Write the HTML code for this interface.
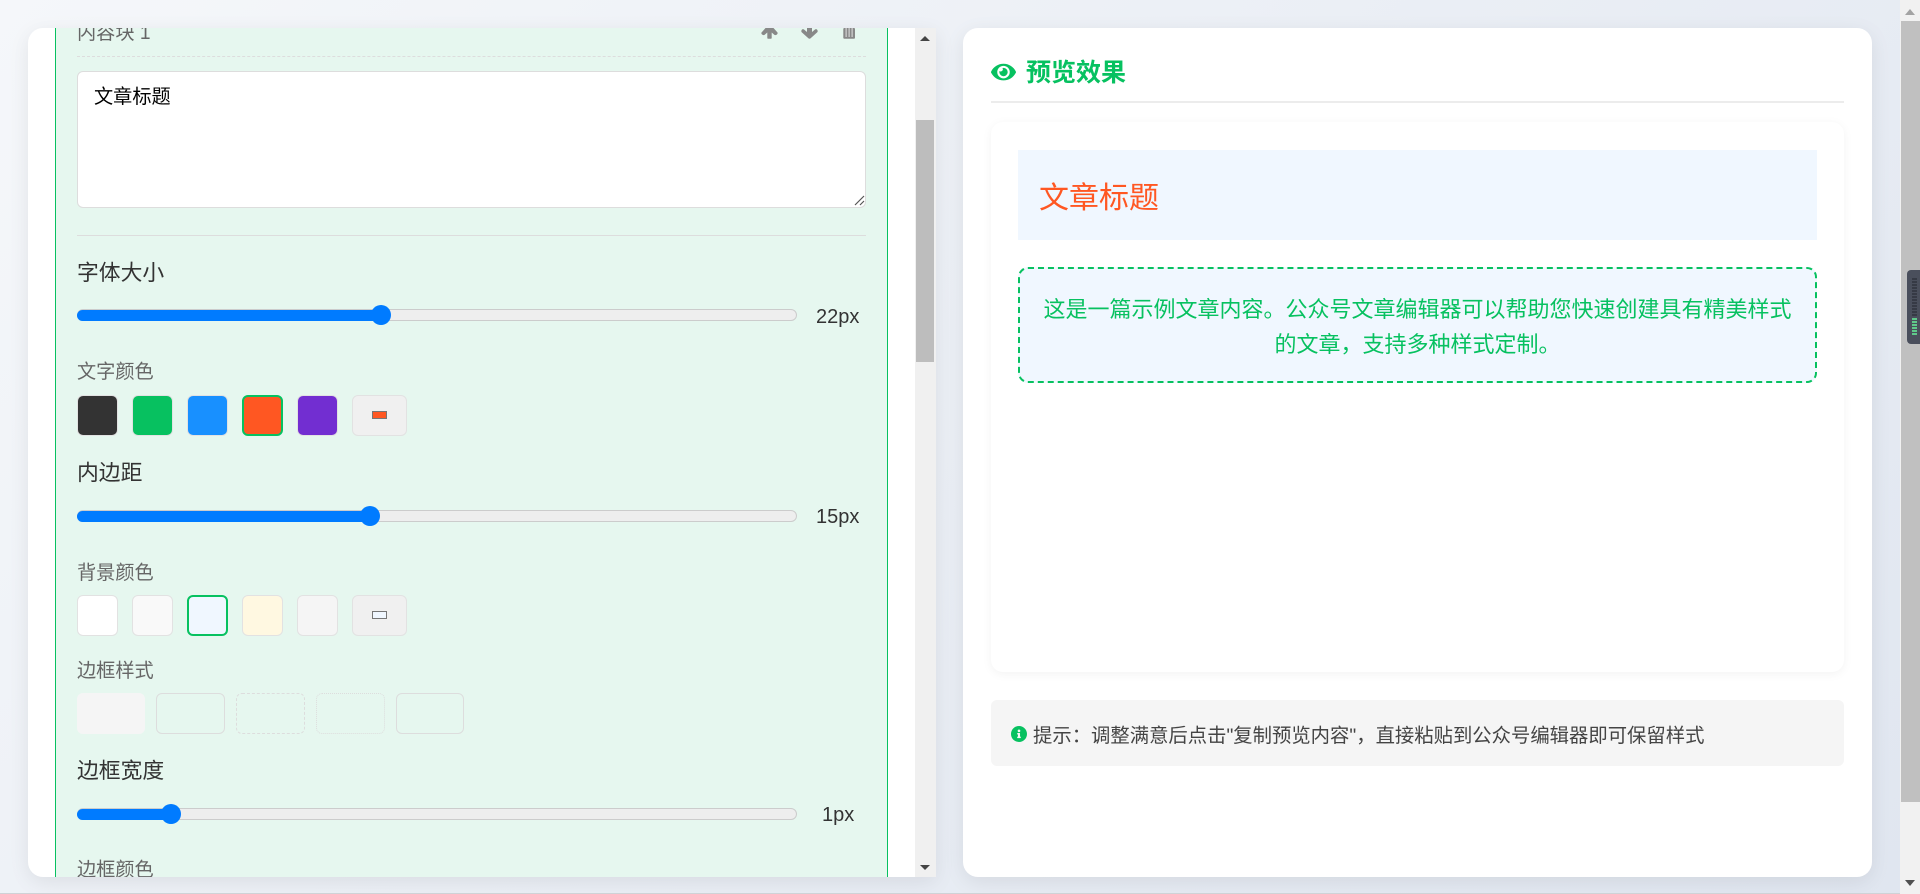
<!DOCTYPE html>
<html lang="zh"><head><meta charset="utf-8"><title>公众号文章编辑器</title>
<style>
*{box-sizing:border-box}
html,body{margin:0;padding:0;width:1920px;height:894px;overflow:hidden}
body{position:relative;background:linear-gradient(135deg,#f5f7fa 0%,#e0e6f0 100%);font-family:"Liberation Sans","Noto Sans CJK SC",sans-serif;color:#333}
.a{position:absolute}
.t{position:absolute;white-space:nowrap;line-height:30px;height:30px}
.lab{font-size:21.8px;color:#333}
.sub{font-size:19.2px;color:#666}
.val{font-size:20px;color:#333}
.panel{position:absolute;top:28px;height:849px;background:#fff;box-shadow:0 5px 20px rgba(0,0,0,.08)}
.track{position:absolute;left:49px;width:720px;height:12px;background:#eee;border:1px solid #ccc;border-radius:6px}
.fill{position:absolute;left:49px;height:11px;background:#007bff;border-radius:6px}
.thumb{position:absolute;width:20px;height:20px;border-radius:50%;background:#007bff}
.sw{position:absolute;width:41px;height:41px;border:1px solid #e2e2e2;border-radius:6px}
.cus{position:absolute;width:55px;height:41px;border:1px solid #e2e2e2;border-radius:6px;background:#f0f0f0}
.cus i{position:absolute;left:19px;top:15px;width:15px;height:8px;border:1px solid #767676}
.bs{position:absolute;top:665px;height:41px;border:1px solid #ddd;border-radius:6px}
</style></head>
<body>
<!-- left panel -->
<div class="panel" style="left:28px;width:908px;border-radius:15px 0 0 15px;overflow:hidden">
  <div class="a" style="left:27px;top:0;width:833px;height:849px;background:#e6f7ef;border-left:1px solid #07c160;border-right:1px solid #07c160"></div>

  <div class="t sub" style="left:49px;top:-9px">内容块 1</div>
  <svg class="a" style="left:0;top:0" width="908" height="20" viewBox="28 28 908 20">
    <path fill="#888" d="M765.5 28H773.5L777.5 32.5Q778 33.5 777 34.5L776 35Q775 35.5 774 34.5L771.7 32.5V38Q771.7 38.7 771 38.7H768Q767.3 38.7 767.3 38V32.5L765 34.5Q764 35.5 763 35L762 34.5Q761 33.5 761.5 32.5Z"/>
    <path fill="#888" d="M807 28H812V32L815 29.5Q816 28.8 817 29.5L817.6 30.5Q818 31.5 817.3 32.2L810.5 38.4Q809.5 39 808.5 38.4L801.7 32.2Q801 31.5 801.4 30.5L802 29.5Q803 28.8 804 29.5L807 32Z"/>
    <rect x="843.3" y="28" width="11.7" height="10.7" rx="1" fill="#888"/>
    <rect x="845.4" y="28" width="1.5" height="9" fill="#c4c4c4"/>
    <rect x="848.4" y="28" width="1.5" height="9" fill="#c4c4c4"/>
    <rect x="851.4" y="28" width="1.5" height="9" fill="#c4c4c4"/>
  </svg>
  <div class="a" style="left:49px;top:28px;width:789px;height:0;border-top:1px dashed #ddd"></div>

  <div class="a" style="left:49px;top:43px;width:789px;height:137px;background:#fff;border:1px solid #ddd;border-radius:6px"></div>
  <div class="t" style="left:66px;top:55px;font-size:19.2px;color:#000">文章标题</div>
  <svg class="a" style="left:825px;top:166px" width="12" height="12" viewBox="0 0 12 12" fill="none" stroke="#555" stroke-width="1.2"><path d="M2 11L11 2M7 11L11 7"/></svg>

  <div class="a" style="left:49px;top:207px;width:789px;height:1px;background:#ddd"></div>

  <div class="t lab" style="left:49px;top:230px">字体大小</div>
  <div class="track" style="top:281px"></div>
  <div class="fill" style="top:281.5px;width:310px"></div>
  <div class="thumb" style="left:343px;top:277px"></div>
  <div class="t val" style="left:788px;top:274px">22px</div>

  <div class="t sub" style="left:49px;top:330px">文字颜色</div>
  <div class="sw" style="left:49px;top:367px;background:#333"></div>
  <div class="sw" style="left:104px;top:367px;background:#07c160"></div>
  <div class="sw" style="left:159px;top:367px;background:#1890ff"></div>
  <div class="sw" style="left:214px;top:367px;background:#ff5722;border:2px solid #07c160"></div>
  <div class="sw" style="left:269px;top:367px;background:#722ed1"></div>
  <div class="cus" style="left:324px;top:367px"><i style="background:#ff5722"></i></div>

  <div class="t lab" style="left:49px;top:430px">内边距</div>
  <div class="track" style="top:482px"></div>
  <div class="fill" style="top:482.5px;width:300px"></div>
  <div class="thumb" style="left:332px;top:478px"></div>
  <div class="t val" style="left:788px;top:474px">15px</div>

  <div class="t sub" style="left:49px;top:531px">背景颜色</div>
  <div class="sw" style="left:49px;top:567px;background:#fff"></div>
  <div class="sw" style="left:104px;top:567px;background:#f9f9f9"></div>
  <div class="sw" style="left:159px;top:567px;background:#f0f7ff;border:2px solid #07c160"></div>
  <div class="sw" style="left:214px;top:567px;background:#fff8e1"></div>
  <div class="sw" style="left:269px;top:567px;background:#f5f5f5"></div>
  <div class="cus" style="left:324px;top:567px"><i style="background:#f0f7ff"></i></div>

  <div class="t sub" style="left:49px;top:629px">边框样式</div>
  <div class="bs" style="left:49px;width:68px;background:#f5f5f5;border-color:#f5f5f5"></div>
  <div class="bs" style="left:128px;width:69px"></div>
  <div class="bs" style="left:208px;width:69px;border-style:dashed"></div>
  <div class="bs" style="left:288px;width:69px;border-style:dotted"></div>
  <div class="bs" style="left:368px;width:68px"></div>

  <div class="t lab" style="left:49px;top:728px">边框宽度</div>
  <div class="track" style="top:780px"></div>
  <div class="fill" style="top:780.5px;width:100px"></div>
  <div class="thumb" style="left:133px;top:776px"></div>
  <div class="t val" style="left:794px;top:772px">1px</div>

  <div class="t sub" style="left:49px;top:828px">边框颜色</div>

  <!-- inner scrollbar -->
  <div class="a" style="left:887px;top:0;width:21px;height:849px;background:#f0f0f0"></div>
  <div class="a" style="left:888px;top:92px;width:18px;height:242px;background:#bdbdbd"></div>
  <div class="a" style="left:892px;top:8px;width:0;height:0;border-left:5px solid transparent;border-right:5px solid transparent;border-bottom:5px solid #444"></div>
  <div class="a" style="left:892px;top:837px;width:0;height:0;border-left:5px solid transparent;border-right:5px solid transparent;border-top:5px solid #444"></div>
</div>

<!-- right panel -->
<div class="panel" style="left:963px;width:909px;border-radius:15px"></div>
<svg class="a" style="left:991px;top:61px" width="25" height="22.2" viewBox="0 0 576 512" fill="#07c160"><path d="M572.52 241.4C518.29 135.59 410.93 64 288 64S57.68 135.64 3.48 241.41a32.35 32.35 0 0 0 0 29.19C57.71 376.41 165.07 448 288 448s230.32-71.64 284.52-177.41a32.35 32.35 0 0 0 0-29.19zM288 400a144 144 0 1 1 144-144 143.93 143.93 0 0 1-144 144zm0-240a95.31 95.31 0 0 0-25.31 3.79 47.85 47.85 0 0 1-66.9 66.9A95.78 95.78 0 1 0 288 160z"/></svg>
<div class="t" style="left:1026px;top:58px;font-size:25px;font-weight:700;color:#07c160">预览效果</div>
<div class="a" style="left:991px;top:101px;width:853px;height:2px;background:#ececec"></div>

<div class="a" style="left:991px;top:122px;width:853px;height:550px;background:#fff;border-radius:12px;box-shadow:0 2px 10px rgba(0,0,0,.05)"></div>
<div class="a" style="left:1018px;top:150px;width:799px;height:90px;background:#f0f7ff"></div>
<div class="t" style="left:1039px;top:184px;font-size:30px;color:#ff5722">文章标题</div>
<div class="a" style="left:1018px;top:267px;width:799px;height:116px;background:#f0f7ff;border:2px dashed #07c160;border-radius:10px"></div>
<div class="t" style="left:1018px;width:799px;top:295px;text-align:center;font-size:22px;color:#07c160">这是一篇示例文章内容。公众号文章编辑器可以帮助您快速创建具有精美样式</div>
<div class="t" style="left:1018px;width:799px;top:330px;text-align:center;font-size:22px;color:#07c160">的文章，支持多种样式定制。</div>

<div class="a" style="left:991px;top:700px;width:853px;height:66px;background:#f5f5f5;border-radius:6px"></div>
<svg class="a" style="left:1011px;top:726px" width="16" height="16" viewBox="8 8 496 496" fill="#07c160"><path d="M256 8C119.043 8 8 119.083 8 256c0 136.997 111.043 248 248 248s248-111.003 248-248C504 119.083 392.957 8 256 8zm0 110c23.196 0 42 18.804 42 42s-18.804 42-42 42-42-18.804-42-42 18.804-42 42-42zm56 254c0 6.627-5.373 12-12 12h-88c-6.627 0-12-5.373-12-12v-24c0-6.627 5.373-12 12-12h12v-64h-12c-6.627 0-12-5.373-12-12v-24c0-6.627 5.373-12 12-12h64c6.627 0 12 5.373 12 12v100h12c6.627 0 12 5.373 12 12v24z"/></svg>
<div class="t" style="left:1033px;top:721px;font-size:19.35px;color:#444">提示：调整满意后点击"复制预览内容"，直接粘贴到公众号编辑器即可保留样式</div>

<!-- bottom strip -->
<div class="a" style="left:0;top:893px;width:1900px;height:1px;background:#cfd2d6"></div>

<!-- page scrollbar -->
<div class="a" style="left:1900px;top:0;width:20px;height:894px;background:#f1f1f1"></div>
<div class="a" style="left:1901px;top:21px;width:19px;height:781px;background:#c0c0c0"></div>
<div class="a" style="left:1905px;top:9px;width:0;height:0;border-left:5px solid transparent;border-right:5px solid transparent;border-bottom:6px solid #a3a3a3"></div>
<div class="a" style="left:1905px;top:880px;width:0;height:0;border-left:5px solid transparent;border-right:5px solid transparent;border-top:6px solid #505050"></div>

<!-- side widget -->
<div class="a" style="left:1907px;top:270px;width:13px;height:74px;background:#4a4f5c;border-radius:4px 0 0 4px"></div>
<div class="a" style="left:1912px;top:278px;width:5px;height:38px;background:repeating-linear-gradient(#363a45 0 2px,#4a4f5c 2px 3px)"></div>
<div class="a" style="left:1912px;top:318px;width:5px;height:18px;background:repeating-linear-gradient(#5fc98a 0 2px,#4a4f5c 2px 3px)"></div>
</body></html>
